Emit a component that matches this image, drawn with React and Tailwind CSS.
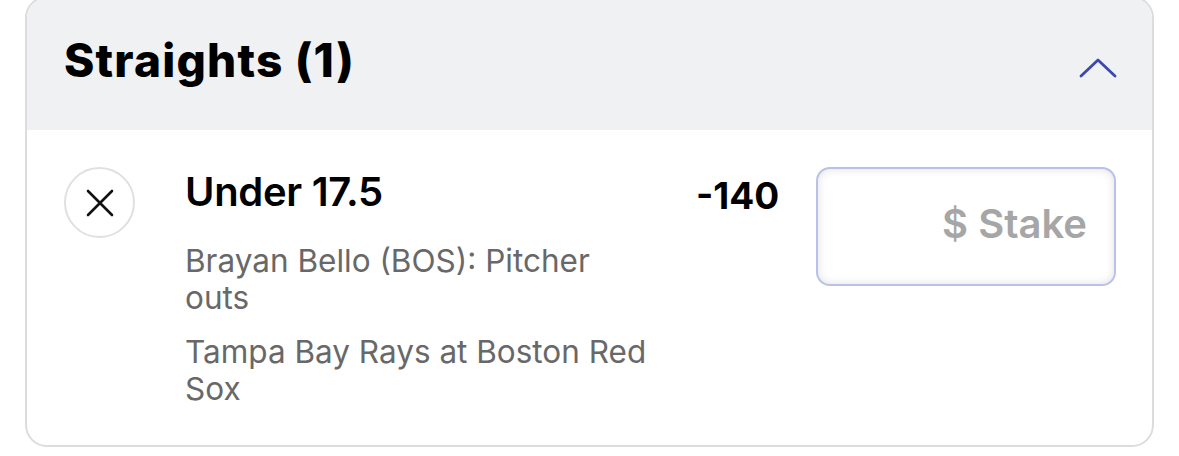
export default function App() {
  return (
    <div className="min-h-screen bg-white overflow-hidden" style={{ fontFamily: "Inter, 'Noto Sans', sans-serif" }}>
      <div className="ml-[25px] mr-[25px] -mt-[4px] rounded-[22px] border-2 border-[#dcdcde] overflow-hidden bg-white">
        {/* header */}
        <div className="h-[132px] bg-[#f0f1f3] flex items-center justify-between pl-[37px] pr-[35px] pb-[8px]">
          <h2 className="text-[46px] leading-[56px] font-extrabold text-black tracking-[1.2px]">Straights (1)</h2>
          <svg width="38" height="20" viewBox="0 0 38 20" fill="none" className="mt-[16px]">
            <path d="M2 18 L19 2 L36 18" stroke="#3a48b0" strokeWidth="2.8" strokeLinecap="round" strokeLinejoin="round" />
          </svg>
        </div>

        {/* bet row */}
        <div className="flex items-start pl-[37px] pr-[36px] pt-[37px] pb-[38px]">
          <button className="w-[71px] h-[71px] shrink-0 rounded-full border-2 border-[#e0e0e0] flex items-center justify-center">
            <svg width="28" height="28" viewBox="0 0 28 28" fill="none">
              <path d="M2 2 L26 26 M26 2 L2 26" stroke="#111" strokeWidth="2.6" strokeLinecap="round" />
            </svg>
          </button>

          <div className="ml-[50px] w-[472px] shrink-0">
            <div className="mt-[1px] text-[40px] leading-[48px] font-semibold text-black tracking-[-0.3px]">Under 17.5</div>
            <div className="mt-[26px] text-[31.5px] leading-[37px] text-[#686868]">Brayan Bello (BOS): Pitcher outs</div>
            <div className="mt-[17px] text-[31.5px] leading-[37px] text-[#686868]">Tampa Bay Rays at Boston Red Sox</div>
          </div>

          <div className="ml-[39px] mt-[7px] text-[37px] leading-[44px] font-bold text-black">-140</div>

          <div className="ml-auto w-[300px] h-[119px] rounded-[14px] border-2 border-[#b9c1e9] bg-white shadow-[inset_0_0_10px_rgba(0,0,0,0.12)] flex items-center justify-end pr-[27px] pb-[6px]">
            <span className="text-[40px] font-semibold text-[#a6a6a6]">$ Stake</span>
          </div>
        </div>
      </div>
    </div>
  );
}
